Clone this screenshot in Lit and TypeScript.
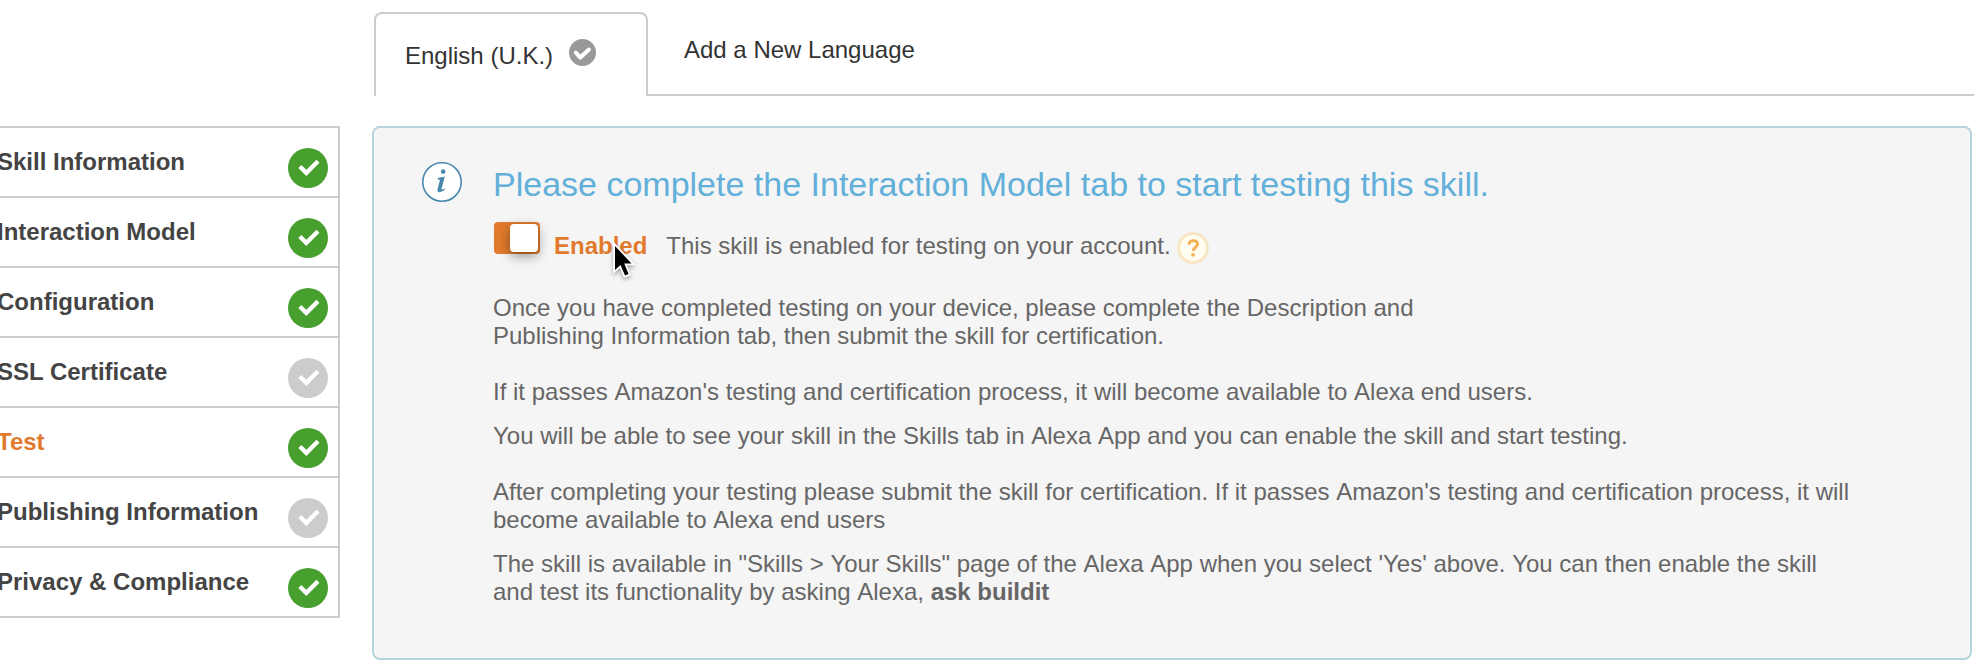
import { LitElement, html, css, svg } from "lit";
import { customElement, property } from "lit/decorators.js";

@customElement("check-badge")
class CheckBadge extends LitElement {
  @property() color = "#479f2e";
  @property() variant = "step";
  static styles = css`
    :host { display: block; }
    svg { display: block; width: 100%; height: 100%; }
  `;
  render() {
    return html`<svg viewBox="0 0 40 40">
      <circle cx="20" cy="20" r="20" fill=${this.color}></circle>
      ${this.variant === "step"
        ? svg`<path d="M11.8 18.5 L18.3 24.9 L30 13.3" fill="none" stroke="#fff" stroke-width="4.3"></path>`
        : svg`<path d="M10 20.3 L16.8 27.4 L29.5 15.6" fill="none" stroke="#fff" stroke-width="6" stroke-linecap="round" stroke-linejoin="round"></path>`}
    </svg>`;
  }
}

const steps = [
  { label: "Skill Information", done: true },
  { label: "Interaction Model", done: true },
  { label: "Configuration", done: true },
  { label: "SSL Certificate", done: false },
  { label: "Test", done: true, active: true },
  { label: "Publishing Information", done: false },
  { label: "Privacy & Compliance", done: true },
];

// Words that open with A or Y are boxed so the preceding space is not kerned.
const copy = (text: string) =>
  text.split(/( )/).map((w) => (/^[AY]/.test(w) ? html`<span class="word">${w}</span>` : w));

@customElement("app-root")
class AppRoot extends LitElement {
  static styles = css`
    :host {
      display: block;
      width: 1974px;
      height: 660px;
      overflow: hidden;
      background: #fff;
      font: 24px/28px "Liberation Sans", Arial, sans-serif;
      color: #666;
    }
    * { box-sizing: border-box; }
    .page { display: grid; grid-template-columns: 340px 1602px; column-gap: 32px; grid-template-rows: 96px 534px; row-gap: 30px; }
    .tabs { grid-column: 2; display: flex; padding: 12px 0 0 2px; color: #333; white-space: nowrap; }
    .tab { width: 274px; border: 2px solid #ccc; border-bottom: 0; border-radius: 8px 8px 0 0; display: flex; padding: 28px 0 0 29px; }
    .tab check-badge { width: 27px; height: 27px; margin: -3px 0 0 16px; }
    .add { flex: 1; border-bottom: 2px solid #ccc; padding: 24px 0 0 36px; }
    .steps { height: 492px; border: 2px solid #ccc; border-left: 0; border-bottom: 0; }
    .step { height: 70px; display: flex; justify-content: space-between; padding: 20px 10px 0 0; border-bottom: 2px solid #ccc; font-weight: bold; color: #444; white-space: nowrap; }
    .step span { margin-left: -3px; }
    .step.active { color: #e17a2d; }
    .step check-badge { width: 40px; height: 40px; }
    .panel { width: 1600px; height: 534px; border: 2px solid #b8d2df; border-radius: 8px; background: #f5f5f5; display: flex; padding: 34px 0 0 48px; white-space: nowrap; }
    .info { width: 40px; height: 40px; flex: none; }
    .body { margin-left: 31px; }
    .word { display: inline-block; }
    h1 { font-size: 34px; line-height: 40px; font-weight: normal; color: #62b0d9; margin: 2px 0 0; }
    .status { display: flex; height: 56px; padding-top: 18px; margin-left: 1px; }
    .switch { width: 46px; height: 32px; border-radius: 4px; background: #e17a2d; padding: 2px; display: flex; justify-content: flex-end; }
    .knob { width: 28px; height: 28px; border-radius: 4px; background: #fff; box-shadow: 0 4px 12px rgba(0,0,0,.4); }
    .enabled { position: relative; margin: 10px 0 0 14px; font-weight: bold; color: #e17a2d; }
    .cursor { position: absolute; left: 59px; top: 11px; width: 30px; height: 42px; overflow: visible; filter: drop-shadow(0 2px 2px rgba(0,0,0,.35)); }
    .note { margin: 10px 0 0 19px; }
    .help { width: 32px; height: 32px; margin: 10px 0 0 6px; }
    p { margin: 0; }
    .g34 { margin-top: 34px; } .g28 { margin-top: 28px; } .g16 { margin-top: 16px; }
  `;
  render() {
    return html`<div class="page">
      <div class="tabs">
        <div class="tab"><span>English (U.K.)</span><check-badge color="#999" variant="tab"></check-badge></div>
        <div class="add">Add a New Language</div>
      </div>
      <nav class="steps">
        ${steps.map((s) => html`<div class="step ${s.active ? "active" : ""}"><span>${s.label}</span>
          <check-badge color=${s.done ? "#479f2e" : "#ccc"}></check-badge></div>`)}
      </nav>
      <section class="panel">
        <svg class="info" viewBox="0 0 40 40">
          <circle cx="20" cy="20" r="19.2" fill="#fff" stroke="#4a89ae" stroke-width="1.6"></circle>
          <circle cx="21.2" cy="9.6" r="2.3" fill="#4a89ae"></circle>
          <path d="M15.8 16 L22.8 14.6 L19.5 27 Q19.3 28.3 22.9 26.6 L22.7 28 Q18.5 31 16 29.8 Q15 29 15.6 27 L18 17.8 L15.8 17.4 Z" fill="#4a89ae"></path>
        </svg>
        <div class="body">
          <h1>Please complete the Interaction Model tab to start testing this skill.</h1>
          <div class="status">
            <div class="switch"><div class="knob"></div></div>
            <div class="enabled">Enabled<svg class="cursor" viewBox="0 0 30 42">
              <path d="M2 3 V27 L7.5 22 L12 32.6 L15.6 31 L11.2 20.5 H18.5 Z" fill="#000" stroke="#fff" stroke-width="3.6" paint-order="stroke"></path></svg></div>
            <div class="note">This skill is enabled for testing on your account.</div>
            <svg class="help" viewBox="0 0 32 32">
              <circle cx="16" cy="16" r="14.5" fill="#fffdf0" stroke="#f8e5c6" stroke-width="3"></circle>
              <path d="M12 12.4 C12 7.6 20.6 7.4 20.6 12 C20.6 15 16.2 15.4 16.2 19" fill="none" stroke="#f4b054" stroke-width="3"></path>
              <circle cx="16.1" cy="22.8" r="1.9" fill="#f4b054"></circle>
            </svg>
          </div>
          <p class="g34">Once you have completed testing on your device, please complete the Description and<br>Publishing Information tab, then submit the skill for certification.</p>
          <p class="g28">${copy("If it passes Amazon's testing and certification process, it will become available to Alexa end users.")}</p>
          <p class="g16">${copy("You will be able to see your skill in the Skills tab in Alexa App and you can enable the skill and start testing.")}</p>
          <p class="g28">${copy("After completing your testing please submit the skill for certification. If it passes Amazon's testing and certification process, it will")}<br>${copy("become available to Alexa end users")}</p>
          <p class="g16">${copy("The skill is available in \"Skills > Your Skills\" page of the Alexa App when you select 'Yes' above. You can then enable the skill")}<br>${copy("and test its functionality by asking Alexa, ")}<b>ask buildit</b></p>
        </div>
      </section>
    </div>`;
  }
}
